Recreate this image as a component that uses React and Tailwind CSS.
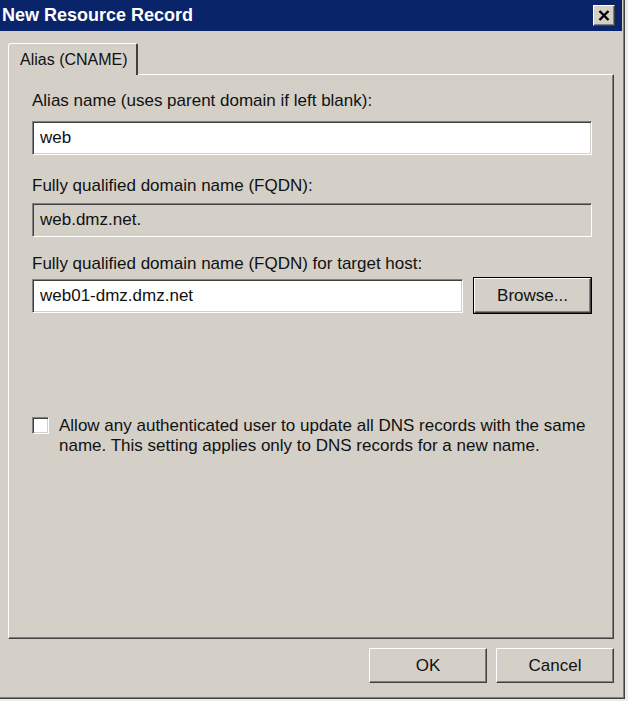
import React from 'react';

const FONT = { fontFamily: '"Liberation Sans", Tahoma, Arial, sans-serif' };

const SUNKEN =
  'border border-t-[#808080] border-l-[#808080] border-b-white border-r-white shadow-[inset_1px_1px_0_#404040,inset_-1px_-1px_0_#d4d0c8]';
const RAISED =
  'border border-t-white border-l-white border-b-[#404040] border-r-[#404040] shadow-[inset_-1px_-1px_0_#808080] bg-[#d4d0c8]';

function Field({ value, disabled, className = '' }) {
  return (
    <div
      className={`${SUNKEN} h-[34px] flex items-center pl-[7px] text-[17px] text-[#111] ${
        disabled ? 'bg-[#d4d0c8]' : 'bg-white'
      } ${className}`}
    >
      {value}
    </div>
  );
}

function Button({ children, isDefault, className = '' }) {
  if (isDefault) {
    return (
      <div className={`border border-black ${className}`}>
        <div className={`${RAISED} h-full flex items-center justify-center text-[17px] text-[#111]`}>
          {children}
        </div>
      </div>
    );
  }
  return (
    <div className={`${RAISED} flex items-center justify-center text-[17px] text-[#111] ${className}`}>
      {children}
    </div>
  );
}

export default function App() {
  return (
    <div className="w-[628px] h-[701px] bg-[#ececec] overflow-hidden" style={FONT}>
      <div className="w-[625px] h-[699px] bg-[#d4d0c8] flex flex-col shadow-[inset_-1px_-1px_0_#404040,inset_-2px_-2px_0_#808080]">
        {/* Title bar */}
        <div className="h-[31px] mr-[3px] bg-[#0a246a] flex items-center justify-between pl-[2px] pr-[7px]">
          <span className="text-white font-bold text-[18px]">New Resource Record</span>
          <div className={`${RAISED} w-[22px] h-[21px] flex items-center justify-center`}>
            <svg width="12" height="11" viewBox="0 0 12 11">
              <path d="M1.5 1 L10.5 10 M10.5 1 L1.5 10" stroke="#000" strokeWidth="2.4" />
            </svg>
          </div>
        </div>

        {/* Body */}
        <div className="flex flex-col pl-[8px] pr-[11px] pt-[12px]">
          {/* Tab */}
          <div className="relative z-10 w-[130px] h-[32px] -mb-[1px] bg-[#d4d0c8] border-l border-t border-white border-r-2 border-r-[#404040] rounded-tl-[3px] rounded-tr-[2px] flex items-center pl-[11px] text-[16px] text-[#111]">
            Alias (CNAME)
          </div>

          {/* Panel */}
          <div className="h-[565px] border-l border-t border-white shadow-[inset_-1px_-1px_0_#808080] border-r border-b border-r-[#404040] border-b-[#404040] flex flex-col pl-[23px] pr-[21px] pt-[16px] text-[17px] text-[#111]">
            <div className="h-[19px] leading-[19px]">Alias name (uses parent domain if left blank):</div>
            <Field value="web" className="mt-[11px]" />

            <div className="h-[19px] leading-[19px] mt-[21px]">Fully qualified domain name (FQDN):</div>
            <Field value="web.dmz.net." disabled className="mt-[8px]" />

            <div className="h-[19px] leading-[19px] mt-[17px]">Fully qualified domain name (FQDN) for target host:</div>
            <div className="mt-[4px] h-[37px] flex items-center gap-[10px]">
              <Field value="web01-dmz.dmz.net" className="w-[431px]" />
              <Button isDefault className="w-[119px] h-[37px]">Browse...</Button>
            </div>

            <div className="mt-[103px] flex items-start gap-[10px]">
              <div className={`${SUNKEN} w-[17px] h-[17px] bg-white shrink-0`} />
              <div className="leading-[20px] -mt-[1px]">
                Allow any authenticated user to update all DNS records with the same
                <br />
                name. This setting applies only to DNS records for a new name.
              </div>
            </div>
          </div>

          {/* Buttons */}
          <div className="mt-[9px] flex justify-end gap-[9px]">
            <Button className="w-[118px] h-[35px]">OK</Button>
            <Button className="w-[118px] h-[35px]">Cancel</Button>
          </div>
        </div>
      </div>
    </div>
  );
}
